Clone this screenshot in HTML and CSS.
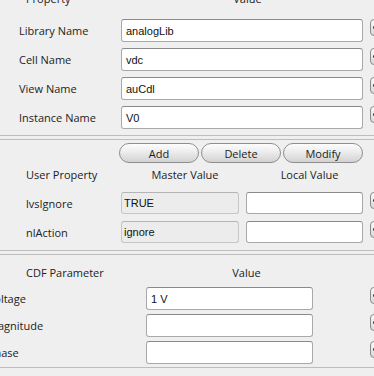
FILE: index.html
```html
<!DOCTYPE html>
<html lang="en">
<head>
  <meta charset="UTF-8" />
  <title>Edit Object Properties</title>
  <link rel="stylesheet" href="styles.css">
</head>
<body>
  <div class="editor">
    <!-- Attribute section -->
    <section class="panel panel-attrs">
      <div class="attrs-grid">
        <div class="col-head head-prop">Property</div>
        <div class="col-head head-value">Value</div>
        <div></div>

        <label class="row-label">Library Name</label>
        <input class="field" value="analogLib">
        <span class="opt-btn"></span>

        <label class="row-label">Cell Name</label>
        <input class="field" value="vdc">
        <span class="opt-btn"></span>

        <label class="row-label">View Name</label>
        <input class="field" value="auCdl">
        <span class="opt-btn"></span>

        <label class="row-label">Instance Name</label>
        <input class="field" value="V0">
        <span class="opt-btn"></span>
      </div>
    </section>

    <!-- User properties -->
    <section class="panel panel-user">
      <div class="btn-row">
        <button class="tool-btn">Add</button>
        <button class="tool-btn">Delete</button>
        <button class="tool-btn">Modify</button>
      </div>
      <div class="user-grid">
        <div class="col-head">User Property</div>
        <div class="col-head head-center">Master Value</div>
        <div class="col-head head-center">Local Value</div>
        <div></div>

        <label class="row-label">lvsIgnore</label>
        <input class="field field-ro" value="TRUE" readonly>
        <input class="field" value="">
        <span class="opt-btn"></span>

        <label class="row-label">nlAction</label>
        <input class="field field-ro" value="ignore" readonly>
        <input class="field" value="">
        <span class="opt-btn"></span>
      </div>
    </section>

    <!-- CDF parameters (scrolled horizontally) -->
    <section class="panel panel-cdf">
      <div class="cdf-grid">
        <div class="col-head head-cdf">CDF Parameter</div>
        <div class="col-head head-cdf-value">Value</div>
        <div></div>

        <label class="row-label cdf-label">DC voltage</label>
        <input class="field" value="1 V">
        <span class="opt-btn"></span>

        <label class="row-label cdf-label">AC magnitude</label>
        <input class="field" value="">
        <span class="opt-btn"></span>

        <label class="row-label cdf-label">AC phase</label>
        <input class="field" value="">
        <span class="opt-btn"></span>
      </div>
    </section>
  </div>
</body>
</html>
```

FILE: styles.css
```css
:root {
  --panel-bg: #efefef;
  --text: #1c1c1c;
  --rule: #bdbdbd;
  --field-border: #a9a9a9;
  --field-border-top: #8a8a8a;
  --ui-font: 'Open Sans', sans-serif;
  --field-font: 'Liberation Sans', Arial, sans-serif;
}

body {
  margin: 0;
  width: 374px;
  height: 376px;
  overflow: hidden;
  background-color: var(--panel-bg);
  font-family: var(--ui-font);
  font-size: 11px;
  color: var(--text);
}

.editor {
  width: 392px;
}

.panel {
  overflow: hidden;
}

.col-head {
  height: 16px;
  line-height: 16px;
  white-space: nowrap;
}

.row-label {
  display: flex;
  align-items: center;
  white-space: nowrap;
}

/* --- attributes --- */
.panel-attrs {
  padding-bottom: 6px;
  border-bottom: 1px solid var(--rule);
}

.attrs-grid {
  display: grid;
  grid-template-columns: 95px 242px 20px;
  grid-template-rows: auto;
  grid-auto-rows: 23px;
  column-gap: 7px;
  row-gap: 6px;
  padding-left: 19px;
  margin-top: -9px;
}

.attrs-grid .col-head {
  margin-bottom: 6px;
}

.head-prop {
  padding-left: 7px;
}

.head-value {
  text-align: center;
  padding-left: 11px;
}

/* --- user properties --- */
.panel-user {
  margin-top: 3px;
  padding-top: 3px;
  padding-bottom: 7px;
  border-top: 1px solid var(--rule);
  border-bottom: 1px solid var(--rule);
}

.btn-row {
  display: flex;
  gap: 2px;
  padding-left: 119px;
}

.tool-btn {
  width: 80px;
  height: 20px;
  padding: 0;
  border: 1px solid #8e8e8e;
  border-radius: 10px;
  background: linear-gradient(#fdfdfd, #ececec 45%, #d2d2d2);
  font-family: var(--ui-font);
  font-size: 11px;
  color: var(--text);
}

.user-grid {
  display: grid;
  grid-template-columns: 88px 118px 117px 20px;
  grid-template-rows: auto;
  grid-auto-rows: 22px;
  column-gap: 7px;
  row-gap: 7px;
  padding-left: 26px;
  margin-top: 4px;
}

.user-grid .col-head {
  margin-bottom: 2px;
}

.head-center {
  text-align: center;
  padding-left: 10px;
}

/* --- CDF parameters --- */
.panel-cdf {
  margin-top: 3px;
  padding-top: 10px;
  padding-bottom: 3px;
  border-top: 1px solid var(--rule);
  border-bottom: 1px solid var(--rule);
}

.cdf-grid {
  display: grid;
  grid-template-columns: 139px 167px 70px;
  grid-template-rows: auto;
  grid-auto-rows: 23px;
  column-gap: 7px;
  row-gap: 4px;
}

.cdf-grid .col-head {
  margin-bottom: 2px;
}

.head-cdf {
  padding-left: 26px;
}

.head-cdf-value {
  text-align: center;
  padding-left: 34px;
}

.cdf-label {
  margin-left: -29px;
}

.cdf-grid .opt-btn {
  justify-self: end;
}

/* --- fields and small buttons --- */
.field {
  box-sizing: border-box;
  width: 100%;
  height: 100%;
  margin: 0;
  padding: 0 0 0 4px;
  border: 1px solid var(--field-border);
  border-top-color: var(--field-border-top);
  border-radius: 3px;
  background: #ffffff;
  font-family: var(--field-font);
  font-size: 11px;
  color: #111;
  outline: none;
}

.field-ro {
  padding-left: 2px;
  background: #ececec;
  border-color: #c6c6c6;
  border-top-color: #b4b4b4;
}

.opt-btn {
  position: relative;
  box-sizing: border-box;
  width: 20px;
  height: 17px;
  border: 1px solid #8a8a8a;
  border-radius: 4px;
  background: linear-gradient(#fafafa, #d8d8d8);
}

.opt-btn::before {
  content: "";
  position: absolute;
  left: 2px;
  top: 6px;
  width: 3px;
  height: 3px;
  border-radius: 50%;
  background: #3a3a3a;
}
```
